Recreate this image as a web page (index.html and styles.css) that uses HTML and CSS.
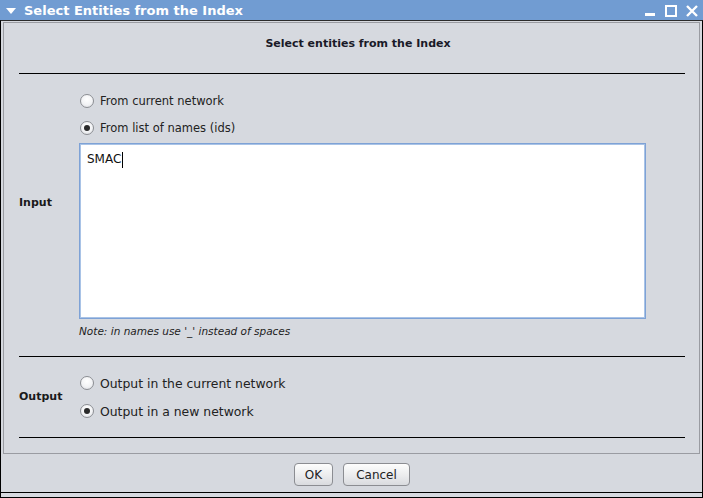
FILE: index.html
```
<!DOCTYPE html>
<html>
<head>
<meta charset="utf-8">
<link rel="stylesheet" href="styles.css">
</head>
<body>
<div class="window">
  <div class="titlebar">
    <svg class="menu-tri" width="10" height="8" viewBox="0 0 10 8"><polygon points="0,1 10,1 5,7" fill="#fff"/></svg>
    <span class="title">Select Entities from the Index</span>
    <div class="wm-buttons">
      <svg width="12" height="12" viewBox="0 0 12 12"><rect x="1" y="8" width="10" height="3" fill="#fff"/></svg>
      <svg width="12" height="12" viewBox="0 0 12 12"><rect x="1" y="1" width="10" height="10" fill="none" stroke="#fff" stroke-width="2"/></svg>
      <svg width="12" height="12" viewBox="0 0 12 12"><path d="M1 1 L11 11 M11 1 L1 11" stroke="#fff" stroke-width="2.4"/></svg>
    </div>
  </div>
  <div class="frame">
    <div class="panel">
      <div class="header">Select entities from the Index</div>
      <div class="rule"></div>
      <div class="section input-section">
        <div class="label input-label">Input</div>
        <div class="controls">
          <div class="radio-row"><span class="radio"></span><span>From current network</span></div>
          <div class="radio-row row2"><span class="radio checked"></span><span>From list of names (ids)</span></div>
          <div class="textarea"><span class="typed">SMAC</span><span class="caret"></span></div>
          <div class="note">Note: in names use '_' instead of spaces</div>
        </div>
      </div>
      <div class="rule"></div>
      <div class="section output-section">
        <div class="label output-label">Output</div>
        <div class="controls">
          <div class="radio-row out-row"><span class="radio"></span><span>Output in the current network</span></div>
          <div class="radio-row out-row row-out2"><span class="radio checked"></span><span>Output in a new network</span></div>
        </div>
      </div>
      <div class="rule"></div>
    </div>
    <div class="buttonbar">
      <button class="btn btn-ok">OK</button>
      <button class="btn btn-cancel">Cancel</button>
    </div>
    <div class="bottom-line"></div>
  </div>
</div>
</body>
</html>
```
FILE: styles.css
```
* { box-sizing: border-box; }
html, body { margin: 0; padding: 0; }
body {
  width: 703px;
  height: 498px;
  overflow: hidden;
  background: #d6d9df;
  font-family: "DejaVu Sans", "Liberation Sans", sans-serif;
  color: #222;
}
.window {
  width: 703px;
  height: 498px;
  border-bottom: 1px solid #000;
  display: flex;
  flex-direction: column;
}
.titlebar {
  height: 20px;
  background: #719cd2;
  display: flex;
  align-items: center;
  padding-left: 6px;
  flex: none;
}
.menu-tri { display: block; margin-top: 1px; }
.title {
  color: #fff;
  font-weight: bold;
  font-size: 13px;
  margin-left: 8px;
}
.wm-buttons {
  margin-left: auto;
  display: flex;
  gap: 9px;
  padding-right: 5px;
  margin-top: 1px;
}
.wm-buttons svg { display: block; }
.frame {
  flex: 1;
  border-top: 1px solid #2b2b2b;
  border-left: 1px solid #000;
  border-right: 1px solid #000;
  display: flex;
  flex-direction: column;
}
.panel {
  margin: 1px 2px 0 2px;
  border: 1px solid #9a9ca2;
}
.header {
  height: 50px;
  line-height: 42px;
  text-align: center;
  font-weight: bold;
  font-size: 11px;
  color: #1a1a28;
  padding-left: 13px;
}
.rule {
  height: 1px;
  background: #000;
  margin: 0 14px 0 15px;
}
.section {
  display: grid;
  grid-template-columns: 75px 1fr;
}
.label {
  padding-left: 15px;
  font-weight: bold;
  font-size: 11px;
  line-height: 14px;
  color: #1a1a1a;
}
.input-section { height: 282px; padding-top: 16px; }
.input-label { margin-top: 106px; }
.output-section { height: 80px; padding-top: 15px; }
.output-label { margin-top: 18px; }
.controls {
  display: flex;
  flex-direction: column;
  padding-right: 53px;
}
.radio-row {
  height: 22px;
  display: flex;
  align-items: center;
  font-size: 11.5px;
  color: #222;
}
.out-row { font-size: 12.4px; }
.radio-row .radio { margin-left: 1px; margin-right: 6px; }
.row2 { margin-top: 5px; }
.row-out2 { margin-top: 6px; }
.radio {
  width: 14px;
  height: 14px;
  border-radius: 50%;
  border: 1px solid #8c8e93;
  background: radial-gradient(circle at 50% 35%, #ffffff 0%, #f2f3f5 55%, #d9dbe0 100%);
  position: relative;
  flex: none;
}
.radio.checked::after {
  content: "";
  position: absolute;
  left: 3px;
  top: 3px;
  width: 6px;
  height: 6px;
  border-radius: 50%;
  background: #2a2a2a;
}
.textarea {
  margin-top: 4px;
  height: 176px;
  width: 567px;
  background: #fff;
  border: 1px solid #7ea2d6;
  box-shadow: inset 0 0 0 1px #a9c3e6;
  padding: 8px 0 0 7px;
  font-size: 12px;
  color: #111;
  display: flex;
  align-items: flex-start;
}
.typed { line-height: 15px; }
.caret {
  width: 1px;
  height: 16px;
  background: #000;
  margin-left: 1px;
}
.note {
  margin-top: 5px;
  font-size: 10.5px;
  font-style: italic;
  line-height: 14px;
  color: #222;
}
.panel > .rule:last-child { margin-bottom: 15px; }
.buttonbar {
  height: 38px;
  display: flex;
  justify-content: center;
  align-items: flex-start;
  gap: 10px;
  padding-top: 9px;
  padding-left: 1px;
}
.btn {
  height: 23px;
  border: 1px solid #8b8d92;
  border-radius: 4px;
  background: linear-gradient(#fdfdfd, #e9eaec 60%, #d9dbdf);
  font-family: "DejaVu Sans", "Liberation Sans", sans-serif;
  font-size: 12px;
  color: #222;
  padding: 0;
}
.btn-ok { width: 39px; }
.btn-cancel { width: 67px; }
.bottom-line {
  height: 1px;
  background: #000;
}
```
